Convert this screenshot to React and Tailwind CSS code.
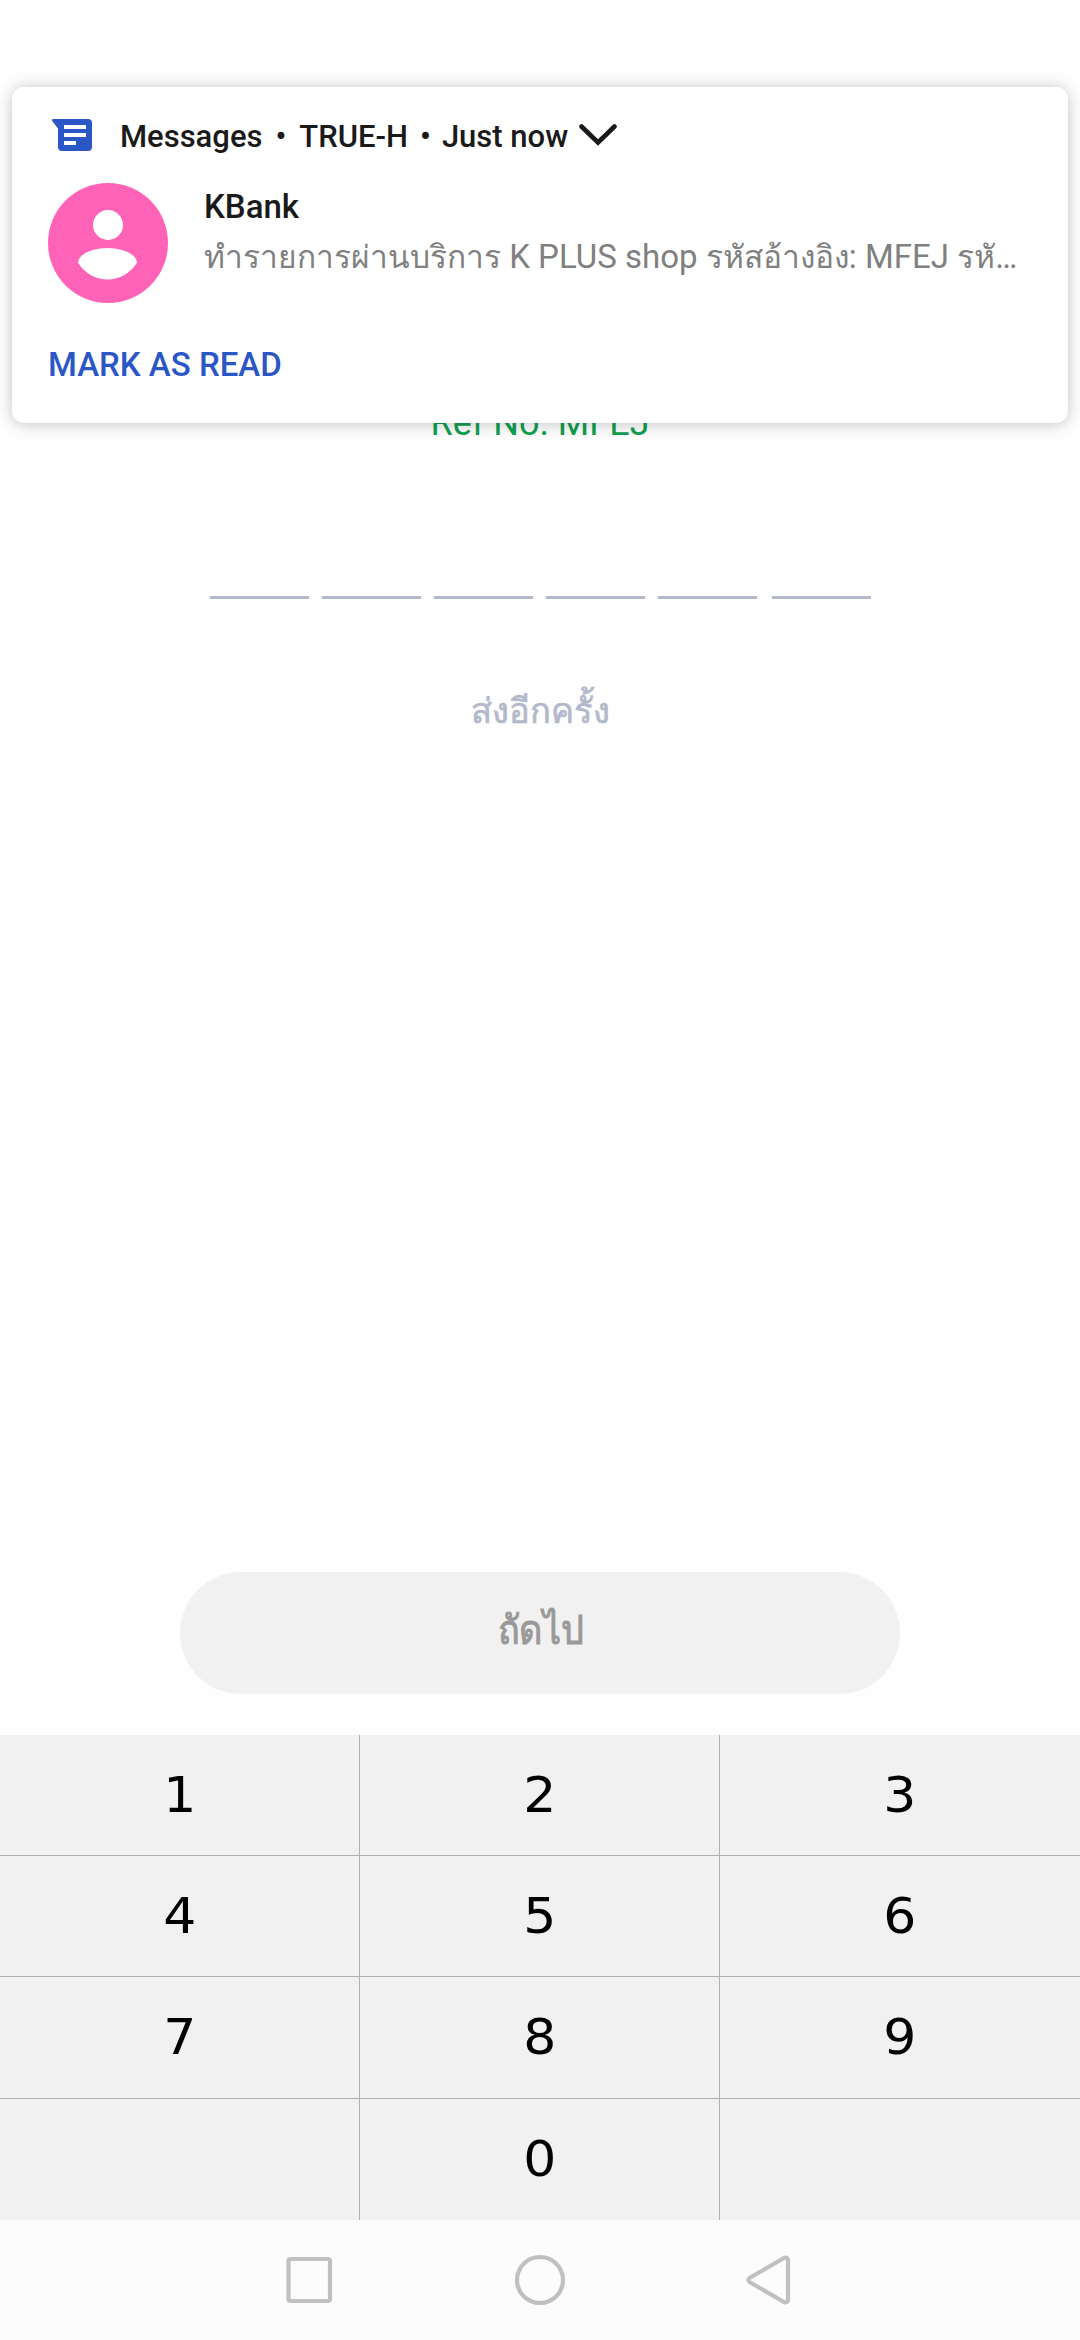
import { useState } from 'react'

const KEYS = ['1', '2', '3', '4', '5', '6', '7', '8', '9', '', '0', '']

function MessagesIcon() {
  return (
    <svg width="40" height="32" viewBox="0 0 40 32" className="shrink-0">
      <path d="M1.500 0H36a4 4 0 0 1 4 4v24a4 4 0 0 1-4 4H10a4 4 0 0 1-4-4V9.500L.4 2.300C-.4 1.200.2 0 1.500 0Z" fill="#2a56c6" />
      <path d="M12 6h22v4H12zM12 14h22v4H12zM12 22h12v4H12z" fill="#fff" />
    </svg>
  )
}

function Avatar() {
  return (
    <svg width="120" height="120" viewBox="0 0 120 120" className="shrink-0">
      <circle cx="60" cy="60" r="60" fill="#ff63b8" />
      <circle cx="60" cy="42" r="15" fill="#fff" />
      <path d="M30 79.500C31 70 46 65 59.500 65S88 70 89 79.500C83 90 71 96.500 59.500 96.500S36 90 30 79.500Z" fill="#fff" />
    </svg>
  )
}

function Notification() {
  return (
    <div className="absolute left-3 top-[87px] w-[1056px] h-[336px] rounded-xl bg-white px-9 text-[#1a1a1a] shadow-[0_1px_16px_rgba(0,0,0,0.24)]">
      <div className="flex items-center h-24 pl-1 whitespace-nowrap">
        <MessagesIcon />
        <div className="flex ml-7 pt-[5px] text-[31px] font-medium">
          <span>Messages</span>
          <span className="mx-[13px]">•</span>
          <span>TRUE-H</span>
          <span className="ml-3 mr-[11px]">•</span>
          <span>Just now</span>
        </div>
        <svg width="38" height="22" viewBox="0 0 38 22" className="ml-[11px]">
          <path d="M2.500 2.500 19 18.500 35.500 2.500" fill="none" stroke="#1a1a1a" strokeWidth="4.600" strokeLinecap="round" />
        </svg>
      </div>
      <div className="flex h-[120px]">
        <Avatar />
        <div className="ml-9 whitespace-nowrap">
          <p className="text-[33px] leading-[48px] font-medium">KBank</p>
          <p className="text-[33px] leading-[52px] text-[#808080]">
            <span className="text-[31.7px]">ทำรายการผ่านบริการ</span> K PLUS shop{' '}
            <span className="text-[31.7px]">รหัสอ้างอิง</span>: MFEJ <span className="text-[31.7px]">รหั</span>…
          </p>
        </div>
      </div>
      <button className="block mt-[38px] text-[33px] leading-[48px] font-medium text-[#2a56c6] whitespace-nowrap">
        MARK AS READ
      </button>
    </div>
  )
}

function CodeSlots({ code }) {
  return (
    <div className="flex gap-[13px] mt-[103px] ml-[210px]">
      {[0, 1, 2, 3, 4, 5].map((i) => (
        <div key={i} className="flex items-end justify-center w-[99px] h-12 border-b-3 border-[#b3b9cb] last:ml-[2px] text-[36px] text-[#1a1a1a]">
          {code[i]}
        </div>
      ))}
    </div>
  )
}

function Keypad({ onPress }) {
  return (
    <div className="grid grid-cols-3 grid-rows-[121px_121px_122px_121px] bg-[#f1f1f1] font-['DejaVu_Sans',sans-serif] text-[50px] text-black">
      {KEYS.map((key, i) => (
        <button
          key={i}
          onClick={() => key && onPress(key)}
          className="flex items-center justify-center border-r border-b border-[#b0b0b0] nth-[3n]:border-r-0 nth-[n+10]:border-b-0"
        >
          <span className="scale-x-[1.04]">{key}</span>
        </button>
      ))}
    </div>
  )
}

function NavBar() {
  return (
    <div className="flex h-[120px] bg-[#fcfcfc] pl-[284px]">
      <svg width="512" height="120" viewBox="284 0 512 120" fill="none" stroke="#c0c0c0" strokeWidth="4.200">
        <rect x="288.500" y="39" width="41.500" height="42" rx="2" />
        <circle cx="540" cy="60" r="23" />
        <path d="M784.500 37.800 749.500 58Q747.500 60 749.500 62L784.500 82.200Q788 83 788 79V41Q788 37 784.500 37.800Z" />
      </svg>
    </div>
  )
}

function App() {
  const [code, setCode] = useState('')

  function handlePress(key) {
    setCode((prev) => (prev.length < 6 ? prev + key : prev))
  }

  return (
    <div className="relative flex flex-col w-[1080px] h-[2340px] overflow-hidden bg-[#fefefe] font-['Roboto','Noto_Sans',sans-serif]">
      <p className="pt-[398px] text-center text-[36px] leading-[50px] text-[#0fa050]">Ref No. MFEJ</p>
      <CodeSlots code={code} />
      <button className="mt-[84px] mx-auto text-[34.5px] leading-[56px] text-[#b3b9cb] [-webkit-text-stroke:0.7px_#b3b9cb]">
        ส่งอีกครั้ง
      </button>
      <button className="flex items-center justify-center mt-auto mb-[41px] mx-auto w-[720px] h-[122px] rounded-full bg-[#f1f1f1] pb-[5px] text-[40px] text-[#999999] [-webkit-text-stroke:1px_#999999]">
        <span className="scale-x-90">ถัดไป</span>
      </button>
      <Keypad onPress={handlePress} />
      <NavBar />
      <Notification />
    </div>
  )
}

export default App
